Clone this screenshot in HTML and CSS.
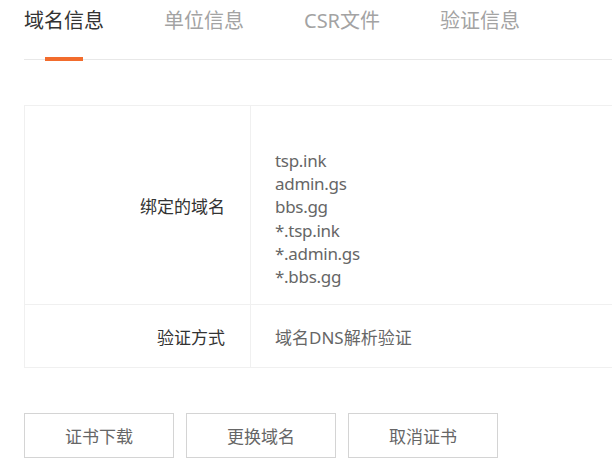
FILE: index.html
```html
<!DOCTYPE html>
<html lang="zh-CN">

<head>
    <meta charset="UTF-8">
    <meta name="viewport" content="width=device-width, initial-scale=1.0">
    <title>域名信息</title>
    <link rel="stylesheet" href="styles.css">
</head>

<body>
    <div class="page">
        <ul class="tabs">
            <li class="tab active">域名信息</li>
            <li class="tab">单位信息</li>
            <li class="tab">CSR文件</li>
            <li class="tab">验证信息</li>
        </ul>

        <table class="info">
            <tr class="row-domains">
                <th>绑定的域名</th>
                <td>
                    <div class="domains">
                        <p>tsp.ink</p>
                        <p>admin.gs</p>
                        <p>bbs.gg</p>
                        <p>*.tsp.ink</p>
                        <p>*.admin.gs</p>
                        <p>*.bbs.gg</p>
                    </div>
                </td>
            </tr>
            <tr class="row-method">
                <th>验证方式</th>
                <td>域名DNS解析验证</td>
            </tr>
        </table>

        <div class="actions">
            <button class="btn">证书下载</button>
            <button class="btn">更换域名</button>
            <button class="btn">取消证书</button>
        </div>
    </div>
</body>

</html>
```

FILE: styles.css
```css
body {
    margin: 0;
    padding: 0;
    background-color: #fff;
    font-family: "Noto Sans", "Noto Sans CJK SC", sans-serif;
    color: #333;
    overflow: hidden;
}

.page {
    padding-left: 24px;
    width: 640px;
}

.tabs {
    display: flex;
    gap: 60px;
    list-style: none;
    margin: 0;
    padding: 0;
    height: 59px;
    border-bottom: 1px solid #e8e8e8;
}

.tab {
    position: relative;
    font-size: 20px;
    line-height: 28px;
    padding-top: 7px;
    color: #a3a3a3;
}

.tab.active {
    color: #333;
}

.tab.active::after {
    content: "";
    position: absolute;
    top: 57px;
    left: 50%;
    width: 38px;
    height: 4px;
    margin-left: -19px;
    background-color: #f26c2d;
}

.info {
    margin-top: 45px;
    width: 100%;
    border-collapse: collapse;
    font-size: 17px;
}

.info th,
.info td {
    border: 1px solid #f0f0f0;
}

.info th {
    width: 200px;
    padding: 0 25px 0 0;
    text-align: right;
    font-weight: normal;
    color: #333;
}

.info td {
    padding: 0 0 0 24px;
    color: #666;
}

.row-domains td {
    height: 199px;
    padding-top: 27px;
    box-sizing: border-box;
}

.row-method td,
.row-method th {
    height: 62px;
}

.domains p {
    margin: 0;
    line-height: 23.3px;
    letter-spacing: -0.3px;
}

.actions {
    display: flex;
    gap: 12px;
    margin-top: 45px;
}

.btn {
    width: 150px;
    height: 45px;
    background-color: #fff;
    border: 1px solid #d4d4d4;
    font-family: "Noto Sans", "Noto Sans CJK SC", sans-serif;
    font-size: 17px;
    color: #666;
    cursor: pointer;
}

.btn:hover {
    border-color: #f26c2d;
    color: #f26c2d;
}
```
